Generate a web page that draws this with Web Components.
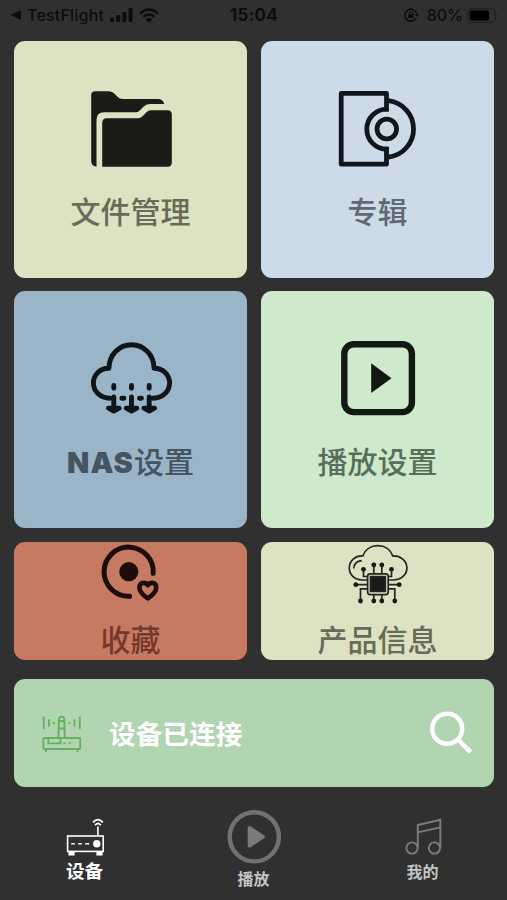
<!DOCTYPE html>
<html lang="zh-CN">
<head>
<meta charset="utf-8">
<title>设备</title>
<style>
    body {
        margin: 0;
        background-color: #303030;
        font-family: Inter, "Noto Sans CJK SC", sans-serif;
    }
</style>
</head>
<body>
<home-screen>
    <status-bar slot="status"></status-bar>

    <home-tile style="--tile-color: #dde2c3">
        <svg slot="icon" viewBox="0 0 84 84" fill="#1b1c18">
            <path d="M7.5 79.7Q2.2 79 2.2 74V8.3Q2.2 4.3 6.2 4.3H20Q23 4.3 25.5 6.8L28.5 9.8Q30.5 12 34 12H69Q74 12 75.2 17H61Q57 17 54.2 20L50.5 23.8Q49 25.3 46.5 25.3H15Q7.5 25.3 7.5 32.8Z"/>
            <path d="M13.2 79.7V36Q13.2 31.3 18 31.3H49Q51.5 31.3 53.5 29.3L57.5 25.3Q59.5 23.3 62 23.3H78.5Q82.8 23.3 82.8 27.6V75.4Q82.8 79.7 78.5 79.7Z"/>
        </svg>
        文件管理
    </home-tile>

    <home-tile style="--tile-color: #cddbe8; --label-color: #5e6973">
        <svg slot="icon" viewBox="0 0 84 84" fill="none" stroke="#11161c" stroke-width="4.8" stroke-linejoin="round">
            <path d="M50.5 24.6V6.4H5.2V77.2H50.5V59.8"/>
            <path d="M52.5 22.2H50.8A20 20 0 0 0 50.8 62.2H52.5"/>
            <path d="M52.5 13.7A28.4 28.4 0 0 1 52.5 70.1"/>
            <circle cx="50.8" cy="42" r="9.8"/>
        </svg>
        专辑
    </home-tile>

    <home-tile style="--tile-color: #9bb5c8; --label-color: #445461">
        <svg slot="icon" viewBox="0 0 84 84" fill="none" stroke="#0e151b" stroke-width="4.9" stroke-linecap="round" stroke-linejoin="round">
            <path d="M21 61.2C11 61.2 4.4 54 4.4 46C4.4 38 11 31 20 31.2C20 18 30 7.8 42.5 7.8S65 18 65 31.2C74 31 80.6 38 80.6 46C80.6 54 74 61.2 64 61.2"/>
            <path d="M32.8 61.2H35M50.5 61.2H52.5M24.8 48.5V51.2M42.5 48.5V51.2M60.2 48.5V51.2"/>
            <path d="M24.8 60V73M19.5 71.2L24.8 74L30.1 71.2ZM42.5 60V73M37.2 71.2L42.5 74L47.8 71.2ZM60.2 60V73M54.9 71.2L60.2 74L65.5 71.2Z"/>
        </svg>
        <b>NAS</b>设置
    </home-tile>

    <home-tile style="--tile-color: #cee9cb; --label-color: #58705a">
        <svg slot="icon" viewBox="0 0 84 84">
            <rect x="8.3" y="7.3" width="67.6" height="67.8" rx="9.5" fill="none" stroke="#121914" stroke-width="6.4"/>
            <path d="M35.2 26.3L55.5 41.2L35.2 56Z" fill="#121914"/>
        </svg>
        播放设置
    </home-tile>

    <home-tile small style="--tile-color: #c77a62; --label-color: #74382c">
        <svg slot="icon" viewBox="0 0 60 60" fill="none" stroke="#1d0d0a" stroke-width="5" stroke-linecap="round" stroke-linejoin="round">
            <path d="M52.2 29.3A24.6 24.6 0 1 0 28.6 52.3"/>
            <circle cx="27.8" cy="27.7" r="9.6" fill="#1d0d0a" stroke="none"/>
            <path stroke-width="4.6" d="M46.8 54.4C42 51 38.4 47.5 38.4 43.4C38.4 38.4 44 37.4 46.8 41.2C49.6 37.4 55.2 38.4 55.2 43.4C55.2 47.5 51.6 51 46.8 54.4Z"/>
        </svg>
        收藏
    </home-tile>

    <home-tile small style="--tile-color: #dde2c3">
        <svg slot="icon" viewBox="0 0 60 60" fill="none" stroke="#24261f" stroke-width="1.7">
            <path d="M19.2 36H14C6.5 36 1.3 30.6 1.3 24C1.3 17 7 11.5 14.8 12C17 5.5 22.8 1.7 29.8 1.7S42.6 5.5 44.8 12C52.6 11.5 58.9 17 58.9 24C58.9 30.6 53.1 36 45.6 36H40.5"/>
            <path d="M5.8 24.5C6 20 9 17 13.8 16.6"/>
            <path d="M15.5 25.3V32.5H19.2M25.8 21V29M33.8 21V29M43.5 25.3V32.5H40.5M7.8 40.7H19M40.5 40.7H51.2M12.5 57V44.8H19.2M46.8 57V44.8H40.5M25.8 57V51M33.8 57V51"/>
            <rect x="19.6" y="29.8" width="20.6" height="20.8" rx="2.5"/>
            <rect x="22.5" y="32.6" width="14.8" height="14.8" fill="#1a1b17"/>
            <g fill="#1a1b17" stroke="none">
                <circle cx="15.5" cy="25.3" r="2.4"/>
                <circle cx="25.8" cy="21" r="2.4"/>
                <circle cx="33.8" cy="21" r="2.4"/>
                <circle cx="43.5" cy="25.3" r="2.4"/>
                <circle cx="7.8" cy="40.7" r="2.4"/>
                <circle cx="51.2" cy="40.7" r="2.4"/>
                <circle cx="12.5" cy="57" r="2.4"/>
                <circle cx="25.8" cy="57" r="2.4"/>
                <circle cx="33.8" cy="57" r="2.4"/>
                <circle cx="46.8" cy="57" r="2.4"/>
            </g>
        </svg>
        产品信息
    </home-tile>

    <device-banner slot="banner">设备已连接</device-banner>

    <tab-item slot="tabs" active>
        <svg slot="icon" viewBox="0 0 40 40" width="40" height="40" fill="none" stroke="#fff" stroke-width="1.6">
            <rect x="2.6" y="19" width="35.6" height="15.4"/>
            <path d="M6.2 26.8H9.8M13.2 26.8H16.8M20.2 26.8H24.2M32.9 9.5V19"/>
            <path d="M28 5.4Q32.9 -0.2 37.8 5.4M30 8.2Q32.9 4.6 35.8 8.2"/>
            <circle cx="31.8" cy="26.8" r="3.7" fill="#fff" stroke="none"/>
            <path d="M3.4 34.8H9.6V38.6H3.4ZM31.4 34.8H37.6V38.6H31.4Z" fill="#fff" stroke="none"/>
        </svg>
        设备
    </tab-item>
    <tab-item slot="tabs" big>
        <svg slot="icon" viewBox="0 0 54 54" width="54" height="54">
            <circle cx="27.3" cy="26.8" r="24.6" fill="none" stroke="#717171" stroke-width="4.4"/>
            <path d="M22.5 17.8L36 26.8L22.5 35.8Z" fill="#7b7b7b" stroke="#7b7b7b" stroke-width="3.6" stroke-linejoin="round"/>
        </svg>
        播放
    </tab-item>
    <tab-item slot="tabs">
        <svg slot="icon" viewBox="0 0 40 40" width="40" height="40" fill="none" stroke="#7c7c7c" stroke-width="1.9">
            <circle cx="9" cy="31" r="5.6"/>
            <circle cx="31.4" cy="31" r="5.6"/>
            <path d="M14.8 31V8L37.3 2.8V31M14.8 15.4L37.3 10.4"/>
        </svg>
        我的
    </tab-item>
</home-screen>

<script>
function makeTemplate(html) {
    const template = document.createElement('template');
    template.innerHTML = html;
    return template;
}

const homeScreenTemplate = makeTemplate(`
    <style>
        :host {
            display: flex;
            flex-direction: column;
            box-sizing: border-box;
            height: 900px;
            background-color: #303030;
        }

        .tiles {
            display: grid;
            grid-template-columns: 1fr 1fr;
            grid-template-rows: 236.8px 236.8px 118px;
            gap: 13.5px 14px;
            padding: 0 13px 0 14px;
            margin-bottom: 19.4px;
        }

        .tabs {
            display: grid;
            grid-template-columns: repeat(3, 1fr);
            flex: 1;
        }
    </style>

    <slot name="status"></slot>
    <div class="tiles"><slot></slot></div>
    <slot name="banner"></slot>
    <div class="tabs"><slot name="tabs"></slot></div>
`);

const statusBarTemplate = makeTemplate(`
    <style>
        :host {
            display: grid;
            grid-template-columns: 1fr auto 1fr;
            align-items: center;
            height: 30px;
            padding: 0 8px 11px 9px;
            color: #0c0c0c;
            font-size: 16px;
            font-weight: 500;
            line-height: 30px;
        }

        .side {
            display: flex;
            align-items: center;
        }

        .right {
            justify-content: flex-end;
        }

        .back {
            margin-right: 6px;
        }

        .app {
            letter-spacing: .2px;
            margin-right: 6px;
        }

        .signal {
            margin-right: 6px;
        }

        .time {
            font-weight: 700;
            font-size: 17px;
            letter-spacing: .2px;
        }

        .lock {
            margin-right: 8px;
        }

        .battery {
            margin-left: 4px;
        }
    </style>

    <div class="side">
        <svg class="back" width="12" height="12" viewBox="0 0 12 12"><path d="M1.5 6L12 1V11Z" fill="currentColor"/></svg>
        <span class="app">TestFlight</span>
        <svg class="signal" width="23" height="14" viewBox="0 0 23 14" fill="currentColor">
            <rect y="9.5" width="4" height="4.5" rx="1"/>
            <rect x="6.2" y="7" width="4" height="7" rx="1"/>
            <rect x="12.4" y="4" width="4" height="10" rx="1"/>
            <rect x="18.6" width="4" height="14" rx="1"/>
        </svg>
        <svg width="20" height="15" viewBox="0 0 20 15" fill="none" stroke="currentColor" stroke-width="2.4">
            <path d="M1 5.6Q10 -2.6 19 5.6M4.4 9Q10 4 15.6 9"/>
            <path d="M10 14.6L6.8 11.4Q10 8.8 13.2 11.4Z" fill="currentColor" stroke="none"/>
        </svg>
    </div>
    <span class="time">15:04</span>
    <div class="side right">
        <svg class="lock" width="15" height="14" viewBox="0 0 15 14" fill="none" stroke="currentColor" stroke-width="1.6">
            <path d="M12.6 5A6 6 0 1 0 12 10.4"/>
            <path d="M10.6 6H15L12.8 9Z" fill="currentColor" stroke="none"/>
            <rect x="4.4" y="6.2" width="5.2" height="3.8" fill="currentColor" stroke="none"/>
            <path d="M5.4 6.5V5.4A1.6 1.6 0 0 1 8.6 5.4V6.5" stroke-width="1"/>
        </svg>
        <span>80%</span>
        <svg class="battery" width="32" height="15" viewBox="0 0 32 15">
            <rect x=".7" y=".7" width="27.6" height="13.6" rx="4" fill="none" stroke="#222" stroke-width="1.2"/>
            <rect x="2.6" y="2.6" width="19.4" height="9.8" rx="2" fill="#000"/>
            <path d="M29.8 5Q32 7.5 29.8 10Z" fill="#222"/>
        </svg>
    </div>
`);

const homeTileTemplate = makeTemplate(`
    <style>
        :host {
            display: flex;
            flex-direction: column;
            align-items: center;
            box-sizing: border-box;
            padding-top: 46px;
            gap: 21px;
            border-radius: 11px;
            background-color: var(--tile-color);
            overflow: hidden;
        }

        :host([small]) {
            padding-top: 2px;
            gap: 16px;
        }

        ::slotted(svg) {
            display: block;
            width: 84px;
            height: 84px;
        }

        :host([small]) ::slotted(svg) {
            width: 60px;
            height: 60px;
        }

        .label {
            color: var(--label-color, #686b57);
            font-size: 30px;
            font-weight: 500;
            line-height: 40px;
            white-space: nowrap;
        }

        ::slotted(b) {
            font-weight: 900;
            font-size: 29px;
            letter-spacing: 1px;
        }
    </style>

    <slot name="icon"></slot>
    <div class="label"><slot></slot></div>
`);

const deviceBannerTemplate = makeTemplate(`
    <style>
        :host {
            display: flex;
            align-items: center;
            box-sizing: border-box;
            height: 108px;
            margin: 0 13px 0 14px;
            padding: 0 21px 0 28px;
            border-radius: 11px;
            background-color: #b1d4b1;
        }

        .text {
            flex: 1;
            margin-left: 27px;
            padding-top: 2px;
            color: #fff;
            font-size: 26.7px;
            font-weight: 700;
            line-height: 40px;
        }
    </style>

    <svg width="40" height="40" viewBox="0 0 40 40" fill="none" stroke="#67b062" stroke-width="1.9" stroke-linecap="round">
        <rect x="1.4" y="25" width="36.8" height="11" rx="1"/>
        <path d="M4 36.5V38.4M35.6 36.5V38.4M6.4 27V30.4H18.5V27M22.2 30.2H22.6M27.6 30.2H28"/>
        <path d="M16.4 25L17 6.2A2.6 2.6 0 0 1 22.2 6.2L22.8 25M17 15.5H22.2M17 8H22.2"/>
        <path d="M1.7 4.2V15.4M7 7V12.8M11.8 9.8V10.2M37.8 4.2V15.4M32.4 7V12.8M27.6 9.8V10.2"/>
    </svg>
    <div class="text"><slot></slot></div>
    <svg width="44" height="44" viewBox="0 0 44 44" fill="none" stroke="#fff" stroke-width="4.5">
        <circle cx="18.2" cy="17.8" r="15"/>
        <path d="M29 28.5L41.6 41.2"/>
    </svg>
`);

const tabItemTemplate = makeTemplate(`
    <style>
        :host {
            display: flex;
            flex-direction: column;
            align-items: center;
            padding-top: 30px;
            gap: 3px;
            color: #c4c4c4;
            font-size: 16px;
            font-weight: 700;
            line-height: 24px;
        }

        :host([big]) {
            padding-top: 23px;
        }

        :host([active]) {
            color: #fff;
            font-size: 18.6px;
            gap: 2px;
        }

        ::slotted(svg) {
            display: block;
        }
    </style>

    <slot name="icon"></slot>
    <div><slot></slot></div>
`);

class TemplateElement extends HTMLElement {
    constructor(template) {
        super();
        const shadowRoot = this.attachShadow({ mode: 'open' });
        shadowRoot.appendChild(template.content.cloneNode(true));
    }
}

class HomeScreen extends TemplateElement {
    constructor() {
        super(homeScreenTemplate);
    }
}

class StatusBar extends TemplateElement {
    constructor() {
        super(statusBarTemplate);
    }
}

class HomeTile extends TemplateElement {
    constructor() {
        super(homeTileTemplate);
    }
}

class DeviceBanner extends TemplateElement {
    constructor() {
        super(deviceBannerTemplate);
    }
}

class TabItem extends TemplateElement {
    constructor() {
        super(tabItemTemplate);
    }
}

customElements.define('home-screen', HomeScreen);
customElements.define('status-bar', StatusBar);
customElements.define('home-tile', HomeTile);
customElements.define('device-banner', DeviceBanner);
customElements.define('tab-item', TabItem);
</script>
</body>
</html>
